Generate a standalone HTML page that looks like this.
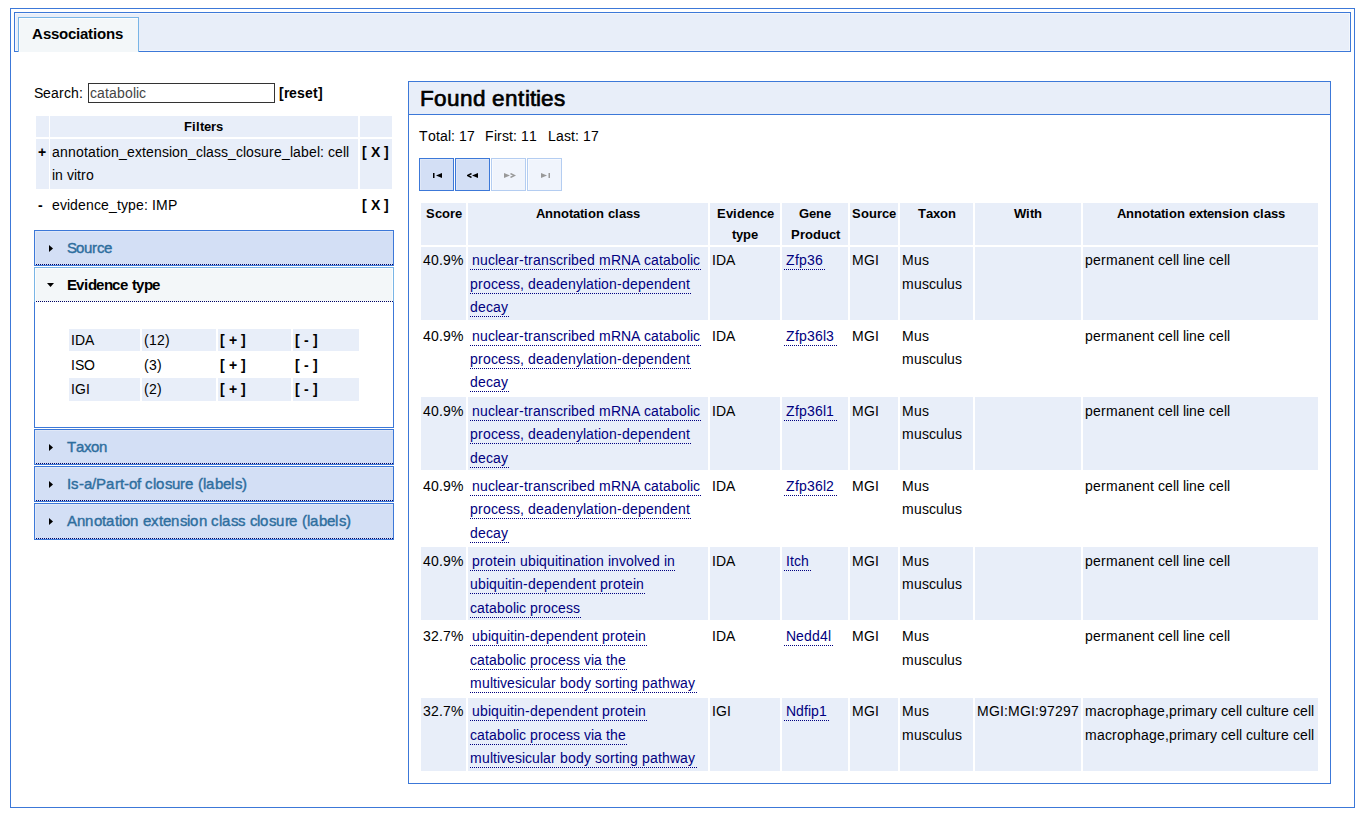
<!DOCTYPE html>
<html><head><meta charset="utf-8"><title>Associations</title>
<style>
html,body{margin:0;padding:0;background:#fff;}
body{width:1363px;height:827px;position:relative;overflow:hidden;font-family:"Liberation Sans",sans-serif;font-size:14px;color:#000;}
.r{position:absolute;display:block;}
.t{position:absolute;white-space:pre;line-height:20px;height:20px;}
.t i{display:inline-block;font-style:normal;}
.w3{width:3px}
.w4{width:4px}
.w5{width:5px}
.w6{width:6px}
.w7{width:7px}
.w8{width:8px}
.w9{width:9px}
.w10{width:10px}
.w11{width:11px}
.w12{width:12px}
.w13{width:13px}
.w14{width:14px}
</style></head><body>
<div class=r style="left:10px;top:8px;width:1345px;height:800px;box-sizing:border-box;border:1px solid #3c78d8;"></div>
<div class=r style="left:14px;top:12px;width:1337px;height:40px;background:#e8eef9;box-sizing:border-box;border:1px solid #3c78d8;box-shadow:inset 0 0 0 1px #f4f7fc;"></div>
<div class=r style="left:18px;top:17px;width:121px;height:35px;background:#f3f7f9;box-sizing:border-box;border:1px solid #79b5e6;border-bottom:0;box-shadow:inset 1px 1px 0 #fcfdfd;"></div>
<div class=t style="left:32px;top:24px;font-size:15px;font-weight:bold;"><i class=w11>A</i><i class=w8>s</i><i class=w8>s</i><i class=w9>o</i><i class=w8>c</i><i class=w4>i</i><i class=w8>a</i><i class=w5>t</i><i class=w4>i</i><i class=w9>o</i><i class=w9>n</i><i class=w8>s</i></div>
<div class=t style="left:34px;top:83px;"><i class=w9>S</i><i class=w8>e</i><i class=w8>a</i><i class=w5>r</i><i class=w7>c</i><i class=w8>h</i><i class=w4>:</i></div>
<div class=r style="left:88px;top:83px;width:187px;height:20px;background:#fff;box-sizing:border-box;border:1px solid #333;"></div>
<div class=t style="left:90px;top:83px;color:#444;"><i class=w7>c</i><i class=w8>a</i><i class=w4>t</i><i class=w8>a</i><i class=w8>b</i><i class=w8>o</i><i class=w3>l</i><i class=w3>i</i><i class=w7>c</i></div>
<div class=t style="left:279px;top:83px;font-weight:bold;"><i class=w5>[</i><i class=w5>r</i><i class=w8>e</i><i class=w8>s</i><i class=w8>e</i><i class=w5>t</i><i class=w5>]</i></div>
<div class=r style="left:36px;top:116px;width:13px;height:21px;background:#e8eef9;"></div>
<div class=r style="left:50px;top:116px;width:308px;height:21px;background:#e8eef9;"></div>
<div class=r style="left:360px;top:116px;width:32px;height:21px;background:#e8eef9;"></div>
<div class=t style="left:184px;top:117px;font-size:13px;font-weight:bold;"><i class=w8>F</i><i class=w4>i</i><i class=w4>l</i><i class=w4>t</i><i class=w7>e</i><i class=w5>r</i><i class=w7>s</i></div>
<div class=r style="left:36px;top:139px;width:13px;height:50px;background:#e8eef9;"></div>
<div class=r style="left:50px;top:139px;width:308px;height:50px;background:#e8eef9;"></div>
<div class=r style="left:360px;top:139px;width:32px;height:50px;background:#e8eef9;"></div>
<div class=t style="left:38px;top:142px;font-weight:bold;"><i class=w8>+</i></div>
<div class=t style="left:52px;top:142px;"><i class=w8>a</i><i class=w8>n</i><i class=w8>n</i><i class=w8>o</i><i class=w4>t</i><i class=w8>a</i><i class=w4>t</i><i class=w3>i</i><i class=w8>o</i><i class=w8>n</i><i class=w8>_</i><i class=w8>e</i><i class=w7>x</i><i class=w4>t</i><i class=w8>e</i><i class=w8>n</i><i class=w7>s</i><i class=w3>i</i><i class=w8>o</i><i class=w8>n</i><i class=w8>_</i><i class=w7>c</i><i class=w3>l</i><i class=w8>a</i><i class=w7>s</i><i class=w7>s</i><i class=w8>_</i><i class=w7>c</i><i class=w3>l</i><i class=w8>o</i><i class=w7>s</i><i class=w8>u</i><i class=w5>r</i><i class=w8>e</i><i class=w8>_</i><i class=w3>l</i><i class=w8>a</i><i class=w8>b</i><i class=w8>e</i><i class=w3>l</i><i class=w4>:</i><i class=w4> </i><i class=w7>c</i><i class=w8>e</i><i class=w3>l</i><i class=w3>l</i></div>
<div class=t style="left:52px;top:165px;"><i class=w3>i</i><i class=w8>n</i><i class=w4> </i><i class=w7>v</i><i class=w3>i</i><i class=w4>t</i><i class=w5>r</i><i class=w8>o</i></div>
<div class=t style="left:362px;top:142px;font-weight:bold;"><i class=w5>[</i><i class=w4> </i><i class=w9>X</i><i class=w4> </i><i class=w5>]</i></div>
<div class=t style="left:38px;top:195px;font-weight:bold;"><i class=w5>-</i></div>
<div class=t style="left:52px;top:195px;"><i class=w8>e</i><i class=w7>v</i><i class=w3>i</i><i class=w8>d</i><i class=w8>e</i><i class=w8>n</i><i class=w7>c</i><i class=w8>e</i><i class=w8>_</i><i class=w4>t</i><i class=w7>y</i><i class=w8>p</i><i class=w8>e</i><i class=w4>:</i><i class=w4> </i><i class=w4>I</i><i class=w12>M</i><i class=w9>P</i></div>
<div class=t style="left:362px;top:195px;font-weight:bold;"><i class=w5>[</i><i class=w4> </i><i class=w9>X</i><i class=w4> </i><i class=w5>]</i></div>
<div class=r style="left:34px;top:230px;width:360px;height:36px;background:#d3dff5;box-sizing:border-box;border:1px solid #3c78d8;box-shadow:inset 1px 1px 0 #e0e8f7;"></div>
<div class=r style="left:36px;top:264px;width:357px;height:1px;background:repeating-linear-gradient(90deg,#000060 0 1px,transparent 1px 2px);"></div>
<svg class=r style="left:49px;top:245px" width="5" height="7"><polygon points="0,0 4,3.5 0,7" fill="#000"/></svg>
<div class=t style="left:67px;top:238px;font-size:15px;color:#2e6e9e;-webkit-text-stroke:0.4px #2e6e9e;"><i class=w9>S</i><i class=w8>o</i><i class=w8>u</i><i class=w5>r</i><i class=w7>c</i><i class=w8>e</i></div>
<div class=r style="left:34px;top:267px;width:360px;height:35px;background:#f3f7f9;box-sizing:border-box;border:1px solid #79b5e6;border-bottom:0;box-shadow:inset 1px 1px 0 #fcfdfd, inset -1px 0 0 #fcfdfd;"></div>
<div class=r style="left:36px;top:301px;width:358px;height:1px;background:repeating-linear-gradient(90deg,#000060 0 1px,transparent 1px 2px);"></div>
<svg class=r style="left:47px;top:283px" width="7" height="4"><polygon points="0,0 7,0 3.5,4" fill="#000"/></svg>
<div class=t style="left:67px;top:275px;font-size:15px;font-weight:bold;"><i class=w9>E</i><i class=w8>v</i><i class=w4>i</i><i class=w8>d</i><i class=w8>e</i><i class=w8>n</i><i class=w8>c</i><i class=w8>e</i><i class=w4> </i><i class=w4>t</i><i class=w8>y</i><i class=w8>p</i><i class=w8>e</i></div>
<div class=r style="left:34px;top:302px;width:360px;height:126px;background:#fff;box-sizing:border-box;border:1px solid #3c78d8;border-top:0;"></div>
<div class=r style="left:69px;top:329px;width:71px;height:22px;background:#e8eef9;"></div>
<div class=r style="left:142px;top:329px;width:74px;height:22px;background:#e8eef9;"></div>
<div class=r style="left:218px;top:329px;width:73px;height:22px;background:#e8eef9;"></div>
<div class=r style="left:293px;top:329px;width:66px;height:22px;background:#e8eef9;"></div>
<div class=t style="left:71px;top:330px;"><i class=w4>I</i><i class=w10>D</i><i class=w9>A</i></div>
<div class=t style="left:144px;top:330px;"><i class=w5>(</i><i class=w8>1</i><i class=w8>2</i><i class=w5>)</i></div>
<div class=t style="left:220px;top:330px;font-weight:bold;"><i class=w5>[</i><i class=w4> </i><i class=w8>+</i><i class=w4> </i><i class=w5>]</i></div>
<div class=t style="left:295px;top:330px;font-weight:bold;"><i class=w5>[</i><i class=w4> </i><i class=w5>-</i><i class=w4> </i><i class=w5>]</i></div>
<div class=t style="left:71px;top:355px;"><i class=w4>I</i><i class=w9>S</i><i class=w11>O</i></div>
<div class=t style="left:144px;top:355px;"><i class=w5>(</i><i class=w8>3</i><i class=w5>)</i></div>
<div class=t style="left:220px;top:355px;font-weight:bold;"><i class=w5>[</i><i class=w4> </i><i class=w8>+</i><i class=w4> </i><i class=w5>]</i></div>
<div class=t style="left:295px;top:355px;font-weight:bold;"><i class=w5>[</i><i class=w4> </i><i class=w5>-</i><i class=w4> </i><i class=w5>]</i></div>
<div class=r style="left:69px;top:378px;width:71px;height:23px;background:#e8eef9;"></div>
<div class=r style="left:142px;top:378px;width:74px;height:23px;background:#e8eef9;"></div>
<div class=r style="left:218px;top:378px;width:73px;height:23px;background:#e8eef9;"></div>
<div class=r style="left:293px;top:378px;width:66px;height:23px;background:#e8eef9;"></div>
<div class=t style="left:71px;top:379px;"><i class=w4>I</i><i class=w11>G</i><i class=w4>I</i></div>
<div class=t style="left:144px;top:379px;"><i class=w5>(</i><i class=w8>2</i><i class=w5>)</i></div>
<div class=t style="left:220px;top:379px;font-weight:bold;"><i class=w5>[</i><i class=w4> </i><i class=w8>+</i><i class=w4> </i><i class=w5>]</i></div>
<div class=t style="left:295px;top:379px;font-weight:bold;"><i class=w5>[</i><i class=w4> </i><i class=w5>-</i><i class=w4> </i><i class=w5>]</i></div>
<div class=r style="left:34px;top:429px;width:360px;height:36px;background:#d3dff5;box-sizing:border-box;border:1px solid #3c78d8;box-shadow:inset 1px 1px 0 #e0e8f7;"></div>
<div class=r style="left:36px;top:463px;width:357px;height:1px;background:repeating-linear-gradient(90deg,#000060 0 1px,transparent 1px 2px);"></div>
<svg class=r style="left:49px;top:444px" width="5" height="7"><polygon points="0,0 4,3.5 0,7" fill="#000"/></svg>
<div class=t style="left:67px;top:437px;font-size:15px;color:#2e6e9e;-webkit-text-stroke:0.4px #2e6e9e;"><i class=w9>T</i><i class=w8>a</i><i class=w7>x</i><i class=w8>o</i><i class=w8>n</i></div>
<div class=r style="left:34px;top:466px;width:360px;height:36px;background:#d3dff5;box-sizing:border-box;border:1px solid #3c78d8;box-shadow:inset 1px 1px 0 #e0e8f7;"></div>
<div class=r style="left:36px;top:500px;width:357px;height:1px;background:repeating-linear-gradient(90deg,#000060 0 1px,transparent 1px 2px);"></div>
<svg class=r style="left:49px;top:481px" width="5" height="7"><polygon points="0,0 4,3.5 0,7" fill="#000"/></svg>
<div class=t style="left:67px;top:474px;font-size:15px;color:#2e6e9e;-webkit-text-stroke:0.4px #2e6e9e;"><i class=w4>I</i><i class=w8>s</i><i class=w5>-</i><i class=w8>a</i><i class=w4>/</i><i class=w10>P</i><i class=w9>a</i><i class=w5>r</i><i class=w4>t</i><i class=w5>-</i><i class=w8>o</i><i class=w4>f</i><i class=w4> </i><i class=w8>c</i><i class=w3>l</i><i class=w9>o</i><i class=w7>s</i><i class=w8>u</i><i class=w5>r</i><i class=w9>e</i><i class=w4> </i><i class=w5>(</i><i class=w3>l</i><i class=w9>a</i><i class=w8>b</i><i class=w8>e</i><i class=w4>l</i><i class=w7>s</i><i class=w5>)</i></div>
<div class=r style="left:34px;top:503px;width:360px;height:37px;background:#d3dff5;box-sizing:border-box;border:1px solid #3c78d8;box-shadow:inset 1px 1px 0 #e0e8f7;"></div>
<div class=r style="left:36px;top:538px;width:357px;height:1px;background:repeating-linear-gradient(90deg,#000060 0 1px,transparent 1px 2px);"></div>
<svg class=r style="left:49px;top:518px" width="5" height="7"><polygon points="0,0 4,3.5 0,7" fill="#000"/></svg>
<div class=t style="left:67px;top:511px;font-size:15px;color:#2e6e9e;-webkit-text-stroke:0.4px #2e6e9e;"><i class=w10>A</i><i class=w8>n</i><i class=w9>n</i><i class=w8>o</i><i class=w4>t</i><i class=w9>a</i><i class=w4>t</i><i class=w3>i</i><i class=w8>o</i><i class=w9>n</i><i class=w4> </i><i class=w8>e</i><i class=w8>x</i><i class=w4>t</i><i class=w8>e</i><i class=w9>n</i><i class=w7>s</i><i class=w3>i</i><i class=w9>o</i><i class=w8>n</i><i class=w4> </i><i class=w8>c</i><i class=w3>l</i><i class=w9>a</i><i class=w7>s</i><i class=w7>s</i><i class=w5> </i><i class=w7>c</i><i class=w3>l</i><i class=w9>o</i><i class=w7>s</i><i class=w9>u</i><i class=w4>r</i><i class=w9>e</i><i class=w4> </i><i class=w5>(</i><i class=w3>l</i><i class=w9>a</i><i class=w8>b</i><i class=w8>e</i><i class=w4>l</i><i class=w7>s</i><i class=w5>)</i></div>
<div class=r style="left:408px;top:81px;width:923px;height:703px;box-sizing:border-box;border:1px solid #3c78d8;"></div>
<div class=r style="left:409px;top:82px;width:921px;height:32px;background:#e8eef9;"></div>
<div class=r style="left:409px;top:114px;width:921px;height:1px;background:#3c78d8;"></div>
<div class=t style="left:420px;top:89px;font-size:22.5px;-webkit-text-stroke:0.7px #000;"><i class=w14>F</i><i class=w13>o</i><i class=w13>u</i><i class=w13>n</i><i class=w13>d</i><i class=w6> </i><i class=w13>e</i><i class=w13>n</i><i class=w7>t</i><i class=w5>i</i><i class=w6>t</i><i class=w5>i</i><i class=w13>e</i><i class=w12>s</i></div>
<div class=t style="left:419px;top:126px;"><i class=w9>T</i><i class=w8>o</i><i class=w4>t</i><i class=w8>a</i><i class=w3>l</i><i class=w4>:</i><i class=w4> </i><i class=w8>1</i><i class=w8>7</i></div>
<div class=t style="left:485px;top:126px;"><i class=w9>F</i><i class=w3>i</i><i class=w5>r</i><i class=w7>s</i><i class=w4>t</i><i class=w4>:</i><i class=w4> </i><i class=w8>1</i><i class=w8>1</i></div>
<div class=t style="left:548px;top:126px;"><i class=w8>L</i><i class=w8>a</i><i class=w7>s</i><i class=w4>t</i><i class=w4>:</i><i class=w4> </i><i class=w8>1</i><i class=w8>7</i></div>
<div class=r style="left:419px;top:158px;width:35px;height:33px;background:#d3dff5;box-sizing:border-box;border:1px solid #3c78d8;box-shadow:inset 1px 1px 0 #e0e8f7;"></div>
<div class=r style="left:455px;top:158px;width:35px;height:33px;background:#d3dff5;box-sizing:border-box;border:1px solid #3c78d8;box-shadow:inset 1px 1px 0 #e0e8f7;"></div>
<div class=r style="left:491px;top:158px;width:35px;height:33px;background:#f0f4fc;box-sizing:border-box;border:1px solid #b4cdf1;box-shadow:inset 1px 1px 0 #f8fafe;"></div>
<div class=r style="left:527px;top:158px;width:35px;height:33px;background:#f0f4fc;box-sizing:border-box;border:1px solid #b4cdf1;box-shadow:inset 1px 1px 0 #f8fafe;"></div>
<svg class=r style="left:433px;top:173px" width="12" height="5"><rect x="0" y="0" width="1.5" height="5" fill="#000"/><polygon points="3,2.5 9,0 9,5" fill="#000"/></svg>
<svg class=r style="left:467px;top:173px" width="12" height="5"><polyline points="4.5,0.5 0.5,2.5 4.5,4.5" fill="none" stroke="#000" stroke-width="1.4"/><polygon points="5,2.5 11,0 11,5" fill="#000"/></svg>
<svg class=r style="left:504px;top:173px" width="12" height="5"><polygon points="0,0 6,2.5 0,5" fill="#999"/><polyline points="6.5,0.5 10.5,2.5 6.5,4.5" fill="none" stroke="#999" stroke-width="1.4"/></svg>
<svg class=r style="left:541px;top:173px" width="12" height="5"><polygon points="0,0 6,2.5 0,5" fill="#999"/><rect x="7.5" y="0" width="1.5" height="5" fill="#999"/></svg>
<div class=r style="left:421px;top:203px;width:45px;height:42px;background:#e8eef9;"></div>
<div class=t style="left:426px;top:204px;font-size:13px;font-weight:bold;"><i class=w9>S</i><i class=w7>c</i><i class=w8>o</i><i class=w5>r</i><i class=w7>e</i></div>
<div class=r style="left:468px;top:203px;width:240px;height:42px;background:#e8eef9;"></div>
<div class=t style="left:536px;top:204px;font-size:13px;font-weight:bold;"><i class=w9>A</i><i class=w8>n</i><i class=w8>n</i><i class=w8>o</i><i class=w4>t</i><i class=w7>a</i><i class=w4>t</i><i class=w4>i</i><i class=w8>o</i><i class=w8>n</i><i class=w4> </i><i class=w7>c</i><i class=w4>l</i><i class=w7>a</i><i class=w7>s</i><i class=w7>s</i></div>
<div class=r style="left:710px;top:203px;width:70px;height:42px;background:#e8eef9;"></div>
<div class=t style="left:717px;top:204px;font-size:13px;font-weight:bold;"><i class=w9>E</i><i class=w7>v</i><i class=w4>i</i><i class=w8>d</i><i class=w7>e</i><i class=w8>n</i><i class=w7>c</i><i class=w7>e</i></div>
<div class=t style="left:732px;top:225px;font-size:13px;font-weight:bold;"><i class=w4>t</i><i class=w7>y</i><i class=w8>p</i><i class=w7>e</i></div>
<div class=r style="left:782px;top:203px;width:66px;height:42px;background:#e8eef9;"></div>
<div class=t style="left:799px;top:204px;font-size:13px;font-weight:bold;"><i class=w10>G</i><i class=w7>e</i><i class=w8>n</i><i class=w7>e</i></div>
<div class=t style="left:791px;top:225px;font-size:13px;font-weight:bold;"><i class=w9>P</i><i class=w5>r</i><i class=w8>o</i><i class=w8>d</i><i class=w8>u</i><i class=w7>c</i><i class=w4>t</i></div>
<div class=r style="left:850px;top:203px;width:48px;height:42px;background:#e8eef9;"></div>
<div class=t style="left:852px;top:204px;font-size:13px;font-weight:bold;"><i class=w9>S</i><i class=w8>o</i><i class=w8>u</i><i class=w5>r</i><i class=w7>c</i><i class=w7>e</i></div>
<div class=r style="left:900px;top:203px;width:73px;height:42px;background:#e8eef9;"></div>
<div class=t style="left:918px;top:204px;font-size:13px;font-weight:bold;"><i class=w8>T</i><i class=w7>a</i><i class=w7>x</i><i class=w8>o</i><i class=w8>n</i></div>
<div class=r style="left:975px;top:203px;width:106px;height:42px;background:#e8eef9;"></div>
<div class=t style="left:1014px;top:204px;font-size:13px;font-weight:bold;"><i class=w12>W</i><i class=w4>i</i><i class=w4>t</i><i class=w8>h</i></div>
<div class=r style="left:1083px;top:203px;width:235px;height:42px;background:#e8eef9;"></div>
<div class=t style="left:1117px;top:204px;font-size:13px;font-weight:bold;"><i class=w9>A</i><i class=w8>n</i><i class=w8>n</i><i class=w8>o</i><i class=w4>t</i><i class=w7>a</i><i class=w4>t</i><i class=w4>i</i><i class=w8>o</i><i class=w8>n</i><i class=w4> </i><i class=w7>e</i><i class=w7>x</i><i class=w4>t</i><i class=w7>e</i><i class=w8>n</i><i class=w7>s</i><i class=w4>i</i><i class=w8>o</i><i class=w8>n</i><i class=w4> </i><i class=w7>c</i><i class=w4>l</i><i class=w7>a</i><i class=w7>s</i><i class=w7>s</i></div>
<div class=r style="left:421px;top:247px;width:45px;height:73px;background:#e8eef9;"></div>
<div class=r style="left:468px;top:247px;width:240px;height:73px;background:#e8eef9;"></div>
<div class=r style="left:710px;top:247px;width:70px;height:73px;background:#e8eef9;"></div>
<div class=r style="left:782px;top:247px;width:66px;height:73px;background:#e8eef9;"></div>
<div class=r style="left:850px;top:247px;width:48px;height:73px;background:#e8eef9;"></div>
<div class=r style="left:900px;top:247px;width:73px;height:73px;background:#e8eef9;"></div>
<div class=r style="left:975px;top:247px;width:106px;height:73px;background:#e8eef9;"></div>
<div class=r style="left:1083px;top:247px;width:235px;height:73px;background:#e8eef9;"></div>
<div class=t style="left:423px;top:250px;"><i class=w8>4</i><i class=w8>0</i><i class=w4>.</i><i class=w8>9</i><i class=w12>%</i></div>
<div class=t style="left:472px;top:250px;color:#000080;"><i class=w8>n</i><i class=w8>u</i><i class=w7>c</i><i class=w3>l</i><i class=w8>e</i><i class=w8>a</i><i class=w5>r</i><i class=w5>-</i><i class=w4>t</i><i class=w5>r</i><i class=w8>a</i><i class=w8>n</i><i class=w7>s</i><i class=w7>c</i><i class=w5>r</i><i class=w3>i</i><i class=w8>b</i><i class=w8>e</i><i class=w8>d</i><i class=w4> </i><i class=w12>m</i><i class=w10>R</i><i class=w10>N</i><i class=w9>A</i><i class=w4> </i><i class=w7>c</i><i class=w8>a</i><i class=w4>t</i><i class=w8>a</i><i class=w8>b</i><i class=w8>o</i><i class=w3>l</i><i class=w3>i</i><i class=w7>c</i></div>
<div class=r style="left:470px;top:269px;width:231px;height:1px;background:repeating-linear-gradient(90deg,#000080 0 1px,transparent 1px 2px);"></div>
<div class=t style="left:470px;top:274px;color:#000080;"><i class=w8>p</i><i class=w5>r</i><i class=w8>o</i><i class=w7>c</i><i class=w8>e</i><i class=w7>s</i><i class=w7>s</i><i class=w4>,</i><i class=w4> </i><i class=w8>d</i><i class=w8>e</i><i class=w8>a</i><i class=w8>d</i><i class=w8>e</i><i class=w8>n</i><i class=w7>y</i><i class=w3>l</i><i class=w8>a</i><i class=w4>t</i><i class=w3>i</i><i class=w8>o</i><i class=w8>n</i><i class=w5>-</i><i class=w8>d</i><i class=w8>e</i><i class=w8>p</i><i class=w8>e</i><i class=w8>n</i><i class=w8>d</i><i class=w8>e</i><i class=w8>n</i><i class=w4>t</i></div>
<div class=r style="left:470px;top:293px;width:221px;height:1px;background:repeating-linear-gradient(90deg,#000080 0 1px,transparent 1px 2px);"></div>
<div class=t style="left:470px;top:297px;color:#000080;"><i class=w8>d</i><i class=w8>e</i><i class=w7>c</i><i class=w8>a</i><i class=w7>y</i></div>
<div class=r style="left:470px;top:316px;width:40px;height:1px;background:repeating-linear-gradient(90deg,#000080 0 1px,transparent 1px 2px);"></div>
<div class=t style="left:712px;top:250px;"><i class=w4>I</i><i class=w10>D</i><i class=w9>A</i></div>
<div class=t style="left:786px;top:250px;color:#000080;"><i class=w9>Z</i><i class=w4>f</i><i class=w8>p</i><i class=w8>3</i><i class=w8>6</i></div>
<div class=r style="left:784px;top:269px;width:42px;height:1px;background:repeating-linear-gradient(90deg,#000080 0 1px,transparent 1px 2px);"></div>
<div class=t style="left:852px;top:250px;"><i class=w12>M</i><i class=w11>G</i><i class=w4>I</i></div>
<div class=t style="left:902px;top:250px;"><i class=w12>M</i><i class=w8>u</i><i class=w7>s</i></div>
<div class=t style="left:902px;top:274px;"><i class=w12>m</i><i class=w8>u</i><i class=w7>s</i><i class=w7>c</i><i class=w8>u</i><i class=w3>l</i><i class=w8>u</i><i class=w7>s</i></div>
<div class=t style="left:1085px;top:250px;"><i class=w8>p</i><i class=w8>e</i><i class=w5>r</i><i class=w12>m</i><i class=w8>a</i><i class=w8>n</i><i class=w8>e</i><i class=w8>n</i><i class=w4>t</i><i class=w4> </i><i class=w7>c</i><i class=w8>e</i><i class=w3>l</i><i class=w3>l</i><i class=w4> </i><i class=w3>l</i><i class=w3>i</i><i class=w8>n</i><i class=w8>e</i><i class=w4> </i><i class=w7>c</i><i class=w8>e</i><i class=w3>l</i><i class=w3>l</i></div>
<div class=t style="left:423px;top:326px;"><i class=w8>4</i><i class=w8>0</i><i class=w4>.</i><i class=w8>9</i><i class=w12>%</i></div>
<div class=t style="left:472px;top:326px;color:#000080;"><i class=w8>n</i><i class=w8>u</i><i class=w7>c</i><i class=w3>l</i><i class=w8>e</i><i class=w8>a</i><i class=w5>r</i><i class=w5>-</i><i class=w4>t</i><i class=w5>r</i><i class=w8>a</i><i class=w8>n</i><i class=w7>s</i><i class=w7>c</i><i class=w5>r</i><i class=w3>i</i><i class=w8>b</i><i class=w8>e</i><i class=w8>d</i><i class=w4> </i><i class=w12>m</i><i class=w10>R</i><i class=w10>N</i><i class=w9>A</i><i class=w4> </i><i class=w7>c</i><i class=w8>a</i><i class=w4>t</i><i class=w8>a</i><i class=w8>b</i><i class=w8>o</i><i class=w3>l</i><i class=w3>i</i><i class=w7>c</i></div>
<div class=r style="left:470px;top:345px;width:231px;height:1px;background:repeating-linear-gradient(90deg,#000080 0 1px,transparent 1px 2px);"></div>
<div class=t style="left:470px;top:349px;color:#000080;"><i class=w8>p</i><i class=w5>r</i><i class=w8>o</i><i class=w7>c</i><i class=w8>e</i><i class=w7>s</i><i class=w7>s</i><i class=w4>,</i><i class=w4> </i><i class=w8>d</i><i class=w8>e</i><i class=w8>a</i><i class=w8>d</i><i class=w8>e</i><i class=w8>n</i><i class=w7>y</i><i class=w3>l</i><i class=w8>a</i><i class=w4>t</i><i class=w3>i</i><i class=w8>o</i><i class=w8>n</i><i class=w5>-</i><i class=w8>d</i><i class=w8>e</i><i class=w8>p</i><i class=w8>e</i><i class=w8>n</i><i class=w8>d</i><i class=w8>e</i><i class=w8>n</i><i class=w4>t</i></div>
<div class=r style="left:470px;top:368px;width:221px;height:1px;background:repeating-linear-gradient(90deg,#000080 0 1px,transparent 1px 2px);"></div>
<div class=t style="left:470px;top:372px;color:#000080;"><i class=w8>d</i><i class=w8>e</i><i class=w7>c</i><i class=w8>a</i><i class=w7>y</i></div>
<div class=r style="left:470px;top:391px;width:40px;height:1px;background:repeating-linear-gradient(90deg,#000080 0 1px,transparent 1px 2px);"></div>
<div class=t style="left:712px;top:326px;"><i class=w4>I</i><i class=w10>D</i><i class=w9>A</i></div>
<div class=t style="left:786px;top:326px;color:#000080;"><i class=w9>Z</i><i class=w4>f</i><i class=w8>p</i><i class=w8>3</i><i class=w8>6</i><i class=w3>l</i><i class=w8>3</i></div>
<div class=r style="left:784px;top:345px;width:53px;height:1px;background:repeating-linear-gradient(90deg,#000080 0 1px,transparent 1px 2px);"></div>
<div class=t style="left:852px;top:326px;"><i class=w12>M</i><i class=w11>G</i><i class=w4>I</i></div>
<div class=t style="left:902px;top:326px;"><i class=w12>M</i><i class=w8>u</i><i class=w7>s</i></div>
<div class=t style="left:902px;top:349px;"><i class=w12>m</i><i class=w8>u</i><i class=w7>s</i><i class=w7>c</i><i class=w8>u</i><i class=w3>l</i><i class=w8>u</i><i class=w7>s</i></div>
<div class=t style="left:1085px;top:326px;"><i class=w8>p</i><i class=w8>e</i><i class=w5>r</i><i class=w12>m</i><i class=w8>a</i><i class=w8>n</i><i class=w8>e</i><i class=w8>n</i><i class=w4>t</i><i class=w4> </i><i class=w7>c</i><i class=w8>e</i><i class=w3>l</i><i class=w3>l</i><i class=w4> </i><i class=w3>l</i><i class=w3>i</i><i class=w8>n</i><i class=w8>e</i><i class=w4> </i><i class=w7>c</i><i class=w8>e</i><i class=w3>l</i><i class=w3>l</i></div>
<div class=r style="left:421px;top:397px;width:45px;height:73px;background:#e8eef9;"></div>
<div class=r style="left:468px;top:397px;width:240px;height:73px;background:#e8eef9;"></div>
<div class=r style="left:710px;top:397px;width:70px;height:73px;background:#e8eef9;"></div>
<div class=r style="left:782px;top:397px;width:66px;height:73px;background:#e8eef9;"></div>
<div class=r style="left:850px;top:397px;width:48px;height:73px;background:#e8eef9;"></div>
<div class=r style="left:900px;top:397px;width:73px;height:73px;background:#e8eef9;"></div>
<div class=r style="left:975px;top:397px;width:106px;height:73px;background:#e8eef9;"></div>
<div class=r style="left:1083px;top:397px;width:235px;height:73px;background:#e8eef9;"></div>
<div class=t style="left:423px;top:401px;"><i class=w8>4</i><i class=w8>0</i><i class=w4>.</i><i class=w8>9</i><i class=w12>%</i></div>
<div class=t style="left:472px;top:401px;color:#000080;"><i class=w8>n</i><i class=w8>u</i><i class=w7>c</i><i class=w3>l</i><i class=w8>e</i><i class=w8>a</i><i class=w5>r</i><i class=w5>-</i><i class=w4>t</i><i class=w5>r</i><i class=w8>a</i><i class=w8>n</i><i class=w7>s</i><i class=w7>c</i><i class=w5>r</i><i class=w3>i</i><i class=w8>b</i><i class=w8>e</i><i class=w8>d</i><i class=w4> </i><i class=w12>m</i><i class=w10>R</i><i class=w10>N</i><i class=w9>A</i><i class=w4> </i><i class=w7>c</i><i class=w8>a</i><i class=w4>t</i><i class=w8>a</i><i class=w8>b</i><i class=w8>o</i><i class=w3>l</i><i class=w3>i</i><i class=w7>c</i></div>
<div class=r style="left:470px;top:420px;width:231px;height:1px;background:repeating-linear-gradient(90deg,#000080 0 1px,transparent 1px 2px);"></div>
<div class=t style="left:470px;top:424px;color:#000080;"><i class=w8>p</i><i class=w5>r</i><i class=w8>o</i><i class=w7>c</i><i class=w8>e</i><i class=w7>s</i><i class=w7>s</i><i class=w4>,</i><i class=w4> </i><i class=w8>d</i><i class=w8>e</i><i class=w8>a</i><i class=w8>d</i><i class=w8>e</i><i class=w8>n</i><i class=w7>y</i><i class=w3>l</i><i class=w8>a</i><i class=w4>t</i><i class=w3>i</i><i class=w8>o</i><i class=w8>n</i><i class=w5>-</i><i class=w8>d</i><i class=w8>e</i><i class=w8>p</i><i class=w8>e</i><i class=w8>n</i><i class=w8>d</i><i class=w8>e</i><i class=w8>n</i><i class=w4>t</i></div>
<div class=r style="left:470px;top:443px;width:221px;height:1px;background:repeating-linear-gradient(90deg,#000080 0 1px,transparent 1px 2px);"></div>
<div class=t style="left:470px;top:448px;color:#000080;"><i class=w8>d</i><i class=w8>e</i><i class=w7>c</i><i class=w8>a</i><i class=w7>y</i></div>
<div class=r style="left:470px;top:467px;width:40px;height:1px;background:repeating-linear-gradient(90deg,#000080 0 1px,transparent 1px 2px);"></div>
<div class=t style="left:712px;top:401px;"><i class=w4>I</i><i class=w10>D</i><i class=w9>A</i></div>
<div class=t style="left:786px;top:401px;color:#000080;"><i class=w9>Z</i><i class=w4>f</i><i class=w8>p</i><i class=w8>3</i><i class=w8>6</i><i class=w3>l</i><i class=w8>1</i></div>
<div class=r style="left:784px;top:420px;width:53px;height:1px;background:repeating-linear-gradient(90deg,#000080 0 1px,transparent 1px 2px);"></div>
<div class=t style="left:852px;top:401px;"><i class=w12>M</i><i class=w11>G</i><i class=w4>I</i></div>
<div class=t style="left:902px;top:401px;"><i class=w12>M</i><i class=w8>u</i><i class=w7>s</i></div>
<div class=t style="left:902px;top:424px;"><i class=w12>m</i><i class=w8>u</i><i class=w7>s</i><i class=w7>c</i><i class=w8>u</i><i class=w3>l</i><i class=w8>u</i><i class=w7>s</i></div>
<div class=t style="left:1085px;top:401px;"><i class=w8>p</i><i class=w8>e</i><i class=w5>r</i><i class=w12>m</i><i class=w8>a</i><i class=w8>n</i><i class=w8>e</i><i class=w8>n</i><i class=w4>t</i><i class=w4> </i><i class=w7>c</i><i class=w8>e</i><i class=w3>l</i><i class=w3>l</i><i class=w4> </i><i class=w3>l</i><i class=w3>i</i><i class=w8>n</i><i class=w8>e</i><i class=w4> </i><i class=w7>c</i><i class=w8>e</i><i class=w3>l</i><i class=w3>l</i></div>
<div class=t style="left:423px;top:476px;"><i class=w8>4</i><i class=w8>0</i><i class=w4>.</i><i class=w8>9</i><i class=w12>%</i></div>
<div class=t style="left:472px;top:476px;color:#000080;"><i class=w8>n</i><i class=w8>u</i><i class=w7>c</i><i class=w3>l</i><i class=w8>e</i><i class=w8>a</i><i class=w5>r</i><i class=w5>-</i><i class=w4>t</i><i class=w5>r</i><i class=w8>a</i><i class=w8>n</i><i class=w7>s</i><i class=w7>c</i><i class=w5>r</i><i class=w3>i</i><i class=w8>b</i><i class=w8>e</i><i class=w8>d</i><i class=w4> </i><i class=w12>m</i><i class=w10>R</i><i class=w10>N</i><i class=w9>A</i><i class=w4> </i><i class=w7>c</i><i class=w8>a</i><i class=w4>t</i><i class=w8>a</i><i class=w8>b</i><i class=w8>o</i><i class=w3>l</i><i class=w3>i</i><i class=w7>c</i></div>
<div class=r style="left:470px;top:495px;width:231px;height:1px;background:repeating-linear-gradient(90deg,#000080 0 1px,transparent 1px 2px);"></div>
<div class=t style="left:470px;top:499px;color:#000080;"><i class=w8>p</i><i class=w5>r</i><i class=w8>o</i><i class=w7>c</i><i class=w8>e</i><i class=w7>s</i><i class=w7>s</i><i class=w4>,</i><i class=w4> </i><i class=w8>d</i><i class=w8>e</i><i class=w8>a</i><i class=w8>d</i><i class=w8>e</i><i class=w8>n</i><i class=w7>y</i><i class=w3>l</i><i class=w8>a</i><i class=w4>t</i><i class=w3>i</i><i class=w8>o</i><i class=w8>n</i><i class=w5>-</i><i class=w8>d</i><i class=w8>e</i><i class=w8>p</i><i class=w8>e</i><i class=w8>n</i><i class=w8>d</i><i class=w8>e</i><i class=w8>n</i><i class=w4>t</i></div>
<div class=r style="left:470px;top:518px;width:221px;height:1px;background:repeating-linear-gradient(90deg,#000080 0 1px,transparent 1px 2px);"></div>
<div class=t style="left:470px;top:523px;color:#000080;"><i class=w8>d</i><i class=w8>e</i><i class=w7>c</i><i class=w8>a</i><i class=w7>y</i></div>
<div class=r style="left:470px;top:542px;width:40px;height:1px;background:repeating-linear-gradient(90deg,#000080 0 1px,transparent 1px 2px);"></div>
<div class=t style="left:712px;top:476px;"><i class=w4>I</i><i class=w10>D</i><i class=w9>A</i></div>
<div class=t style="left:786px;top:476px;color:#000080;"><i class=w9>Z</i><i class=w4>f</i><i class=w8>p</i><i class=w8>3</i><i class=w8>6</i><i class=w3>l</i><i class=w8>2</i></div>
<div class=r style="left:784px;top:495px;width:53px;height:1px;background:repeating-linear-gradient(90deg,#000080 0 1px,transparent 1px 2px);"></div>
<div class=t style="left:852px;top:476px;"><i class=w12>M</i><i class=w11>G</i><i class=w4>I</i></div>
<div class=t style="left:902px;top:476px;"><i class=w12>M</i><i class=w8>u</i><i class=w7>s</i></div>
<div class=t style="left:902px;top:499px;"><i class=w12>m</i><i class=w8>u</i><i class=w7>s</i><i class=w7>c</i><i class=w8>u</i><i class=w3>l</i><i class=w8>u</i><i class=w7>s</i></div>
<div class=t style="left:1085px;top:476px;"><i class=w8>p</i><i class=w8>e</i><i class=w5>r</i><i class=w12>m</i><i class=w8>a</i><i class=w8>n</i><i class=w8>e</i><i class=w8>n</i><i class=w4>t</i><i class=w4> </i><i class=w7>c</i><i class=w8>e</i><i class=w3>l</i><i class=w3>l</i><i class=w4> </i><i class=w3>l</i><i class=w3>i</i><i class=w8>n</i><i class=w8>e</i><i class=w4> </i><i class=w7>c</i><i class=w8>e</i><i class=w3>l</i><i class=w3>l</i></div>
<div class=r style="left:421px;top:547px;width:45px;height:73px;background:#e8eef9;"></div>
<div class=r style="left:468px;top:547px;width:240px;height:73px;background:#e8eef9;"></div>
<div class=r style="left:710px;top:547px;width:70px;height:73px;background:#e8eef9;"></div>
<div class=r style="left:782px;top:547px;width:66px;height:73px;background:#e8eef9;"></div>
<div class=r style="left:850px;top:547px;width:48px;height:73px;background:#e8eef9;"></div>
<div class=r style="left:900px;top:547px;width:73px;height:73px;background:#e8eef9;"></div>
<div class=r style="left:975px;top:547px;width:106px;height:73px;background:#e8eef9;"></div>
<div class=r style="left:1083px;top:547px;width:235px;height:73px;background:#e8eef9;"></div>
<div class=t style="left:423px;top:551px;"><i class=w8>4</i><i class=w8>0</i><i class=w4>.</i><i class=w8>9</i><i class=w12>%</i></div>
<div class=t style="left:472px;top:551px;color:#000080;"><i class=w8>p</i><i class=w5>r</i><i class=w8>o</i><i class=w4>t</i><i class=w8>e</i><i class=w3>i</i><i class=w8>n</i><i class=w4> </i><i class=w8>u</i><i class=w8>b</i><i class=w3>i</i><i class=w8>q</i><i class=w8>u</i><i class=w3>i</i><i class=w4>t</i><i class=w3>i</i><i class=w8>n</i><i class=w8>a</i><i class=w4>t</i><i class=w3>i</i><i class=w8>o</i><i class=w8>n</i><i class=w4> </i><i class=w3>i</i><i class=w8>n</i><i class=w7>v</i><i class=w8>o</i><i class=w3>l</i><i class=w7>v</i><i class=w8>e</i><i class=w8>d</i><i class=w4> </i><i class=w3>i</i><i class=w8>n</i></div>
<div class=r style="left:470px;top:570px;width:206px;height:1px;background:repeating-linear-gradient(90deg,#000080 0 1px,transparent 1px 2px);"></div>
<div class=t style="left:470px;top:574px;color:#000080;"><i class=w8>u</i><i class=w8>b</i><i class=w3>i</i><i class=w8>q</i><i class=w8>u</i><i class=w3>i</i><i class=w4>t</i><i class=w3>i</i><i class=w8>n</i><i class=w5>-</i><i class=w8>d</i><i class=w8>e</i><i class=w8>p</i><i class=w8>e</i><i class=w8>n</i><i class=w8>d</i><i class=w8>e</i><i class=w8>n</i><i class=w4>t</i><i class=w4> </i><i class=w8>p</i><i class=w5>r</i><i class=w8>o</i><i class=w4>t</i><i class=w8>e</i><i class=w3>i</i><i class=w8>n</i></div>
<div class=r style="left:470px;top:593px;width:175px;height:1px;background:repeating-linear-gradient(90deg,#000080 0 1px,transparent 1px 2px);"></div>
<div class=t style="left:470px;top:598px;color:#000080;"><i class=w7>c</i><i class=w8>a</i><i class=w4>t</i><i class=w8>a</i><i class=w8>b</i><i class=w8>o</i><i class=w3>l</i><i class=w3>i</i><i class=w7>c</i><i class=w4> </i><i class=w8>p</i><i class=w5>r</i><i class=w8>o</i><i class=w7>c</i><i class=w8>e</i><i class=w7>s</i><i class=w7>s</i></div>
<div class=r style="left:470px;top:617px;width:112px;height:1px;background:repeating-linear-gradient(90deg,#000080 0 1px,transparent 1px 2px);"></div>
<div class=t style="left:712px;top:551px;"><i class=w4>I</i><i class=w10>D</i><i class=w9>A</i></div>
<div class=t style="left:786px;top:551px;color:#000080;"><i class=w4>I</i><i class=w4>t</i><i class=w7>c</i><i class=w8>h</i></div>
<div class=r style="left:784px;top:570px;width:28px;height:1px;background:repeating-linear-gradient(90deg,#000080 0 1px,transparent 1px 2px);"></div>
<div class=t style="left:852px;top:551px;"><i class=w12>M</i><i class=w11>G</i><i class=w4>I</i></div>
<div class=t style="left:902px;top:551px;"><i class=w12>M</i><i class=w8>u</i><i class=w7>s</i></div>
<div class=t style="left:902px;top:574px;"><i class=w12>m</i><i class=w8>u</i><i class=w7>s</i><i class=w7>c</i><i class=w8>u</i><i class=w3>l</i><i class=w8>u</i><i class=w7>s</i></div>
<div class=t style="left:1085px;top:551px;"><i class=w8>p</i><i class=w8>e</i><i class=w5>r</i><i class=w12>m</i><i class=w8>a</i><i class=w8>n</i><i class=w8>e</i><i class=w8>n</i><i class=w4>t</i><i class=w4> </i><i class=w7>c</i><i class=w8>e</i><i class=w3>l</i><i class=w3>l</i><i class=w4> </i><i class=w3>l</i><i class=w3>i</i><i class=w8>n</i><i class=w8>e</i><i class=w4> </i><i class=w7>c</i><i class=w8>e</i><i class=w3>l</i><i class=w3>l</i></div>
<div class=t style="left:423px;top:626px;"><i class=w8>3</i><i class=w8>2</i><i class=w4>.</i><i class=w8>7</i><i class=w12>%</i></div>
<div class=t style="left:472px;top:626px;color:#000080;"><i class=w8>u</i><i class=w8>b</i><i class=w3>i</i><i class=w8>q</i><i class=w8>u</i><i class=w3>i</i><i class=w4>t</i><i class=w3>i</i><i class=w8>n</i><i class=w5>-</i><i class=w8>d</i><i class=w8>e</i><i class=w8>p</i><i class=w8>e</i><i class=w8>n</i><i class=w8>d</i><i class=w8>e</i><i class=w8>n</i><i class=w4>t</i><i class=w4> </i><i class=w8>p</i><i class=w5>r</i><i class=w8>o</i><i class=w4>t</i><i class=w8>e</i><i class=w3>i</i><i class=w8>n</i></div>
<div class=r style="left:470px;top:645px;width:177px;height:1px;background:repeating-linear-gradient(90deg,#000080 0 1px,transparent 1px 2px);"></div>
<div class=t style="left:470px;top:650px;color:#000080;"><i class=w7>c</i><i class=w8>a</i><i class=w4>t</i><i class=w8>a</i><i class=w8>b</i><i class=w8>o</i><i class=w3>l</i><i class=w3>i</i><i class=w7>c</i><i class=w4> </i><i class=w8>p</i><i class=w5>r</i><i class=w8>o</i><i class=w7>c</i><i class=w8>e</i><i class=w7>s</i><i class=w7>s</i><i class=w4> </i><i class=w7>v</i><i class=w3>i</i><i class=w8>a</i><i class=w4> </i><i class=w4>t</i><i class=w8>h</i><i class=w8>e</i></div>
<div class=r style="left:470px;top:669px;width:157px;height:1px;background:repeating-linear-gradient(90deg,#000080 0 1px,transparent 1px 2px);"></div>
<div class=t style="left:470px;top:673px;color:#000080;"><i class=w12>m</i><i class=w8>u</i><i class=w3>l</i><i class=w4>t</i><i class=w3>i</i><i class=w7>v</i><i class=w8>e</i><i class=w7>s</i><i class=w3>i</i><i class=w7>c</i><i class=w8>u</i><i class=w3>l</i><i class=w8>a</i><i class=w5>r</i><i class=w4> </i><i class=w8>b</i><i class=w8>o</i><i class=w8>d</i><i class=w7>y</i><i class=w4> </i><i class=w7>s</i><i class=w8>o</i><i class=w5>r</i><i class=w4>t</i><i class=w3>i</i><i class=w8>n</i><i class=w8>g</i><i class=w4> </i><i class=w8>p</i><i class=w8>a</i><i class=w4>t</i><i class=w8>h</i><i class=w10>w</i><i class=w8>a</i><i class=w7>y</i></div>
<div class=r style="left:470px;top:692px;width:227px;height:1px;background:repeating-linear-gradient(90deg,#000080 0 1px,transparent 1px 2px);"></div>
<div class=t style="left:712px;top:626px;"><i class=w4>I</i><i class=w10>D</i><i class=w9>A</i></div>
<div class=t style="left:786px;top:626px;color:#000080;"><i class=w10>N</i><i class=w8>e</i><i class=w8>d</i><i class=w8>d</i><i class=w8>4</i><i class=w3>l</i></div>
<div class=r style="left:784px;top:645px;width:50px;height:1px;background:repeating-linear-gradient(90deg,#000080 0 1px,transparent 1px 2px);"></div>
<div class=t style="left:852px;top:626px;"><i class=w12>M</i><i class=w11>G</i><i class=w4>I</i></div>
<div class=t style="left:902px;top:626px;"><i class=w12>M</i><i class=w8>u</i><i class=w7>s</i></div>
<div class=t style="left:902px;top:650px;"><i class=w12>m</i><i class=w8>u</i><i class=w7>s</i><i class=w7>c</i><i class=w8>u</i><i class=w3>l</i><i class=w8>u</i><i class=w7>s</i></div>
<div class=t style="left:1085px;top:626px;"><i class=w8>p</i><i class=w8>e</i><i class=w5>r</i><i class=w12>m</i><i class=w8>a</i><i class=w8>n</i><i class=w8>e</i><i class=w8>n</i><i class=w4>t</i><i class=w4> </i><i class=w7>c</i><i class=w8>e</i><i class=w3>l</i><i class=w3>l</i><i class=w4> </i><i class=w3>l</i><i class=w3>i</i><i class=w8>n</i><i class=w8>e</i><i class=w4> </i><i class=w7>c</i><i class=w8>e</i><i class=w3>l</i><i class=w3>l</i></div>
<div class=r style="left:421px;top:698px;width:45px;height:73px;background:#e8eef9;"></div>
<div class=r style="left:468px;top:698px;width:240px;height:73px;background:#e8eef9;"></div>
<div class=r style="left:710px;top:698px;width:70px;height:73px;background:#e8eef9;"></div>
<div class=r style="left:782px;top:698px;width:66px;height:73px;background:#e8eef9;"></div>
<div class=r style="left:850px;top:698px;width:48px;height:73px;background:#e8eef9;"></div>
<div class=r style="left:900px;top:698px;width:73px;height:73px;background:#e8eef9;"></div>
<div class=r style="left:975px;top:698px;width:106px;height:73px;background:#e8eef9;"></div>
<div class=r style="left:1083px;top:698px;width:235px;height:73px;background:#e8eef9;"></div>
<div class=t style="left:423px;top:701px;"><i class=w8>3</i><i class=w8>2</i><i class=w4>.</i><i class=w8>7</i><i class=w12>%</i></div>
<div class=t style="left:472px;top:701px;color:#000080;"><i class=w8>u</i><i class=w8>b</i><i class=w3>i</i><i class=w8>q</i><i class=w8>u</i><i class=w3>i</i><i class=w4>t</i><i class=w3>i</i><i class=w8>n</i><i class=w5>-</i><i class=w8>d</i><i class=w8>e</i><i class=w8>p</i><i class=w8>e</i><i class=w8>n</i><i class=w8>d</i><i class=w8>e</i><i class=w8>n</i><i class=w4>t</i><i class=w4> </i><i class=w8>p</i><i class=w5>r</i><i class=w8>o</i><i class=w4>t</i><i class=w8>e</i><i class=w3>i</i><i class=w8>n</i></div>
<div class=r style="left:470px;top:720px;width:177px;height:1px;background:repeating-linear-gradient(90deg,#000080 0 1px,transparent 1px 2px);"></div>
<div class=t style="left:470px;top:725px;color:#000080;"><i class=w7>c</i><i class=w8>a</i><i class=w4>t</i><i class=w8>a</i><i class=w8>b</i><i class=w8>o</i><i class=w3>l</i><i class=w3>i</i><i class=w7>c</i><i class=w4> </i><i class=w8>p</i><i class=w5>r</i><i class=w8>o</i><i class=w7>c</i><i class=w8>e</i><i class=w7>s</i><i class=w7>s</i><i class=w4> </i><i class=w7>v</i><i class=w3>i</i><i class=w8>a</i><i class=w4> </i><i class=w4>t</i><i class=w8>h</i><i class=w8>e</i></div>
<div class=r style="left:470px;top:744px;width:157px;height:1px;background:repeating-linear-gradient(90deg,#000080 0 1px,transparent 1px 2px);"></div>
<div class=t style="left:470px;top:748px;color:#000080;"><i class=w12>m</i><i class=w8>u</i><i class=w3>l</i><i class=w4>t</i><i class=w3>i</i><i class=w7>v</i><i class=w8>e</i><i class=w7>s</i><i class=w3>i</i><i class=w7>c</i><i class=w8>u</i><i class=w3>l</i><i class=w8>a</i><i class=w5>r</i><i class=w4> </i><i class=w8>b</i><i class=w8>o</i><i class=w8>d</i><i class=w7>y</i><i class=w4> </i><i class=w7>s</i><i class=w8>o</i><i class=w5>r</i><i class=w4>t</i><i class=w3>i</i><i class=w8>n</i><i class=w8>g</i><i class=w4> </i><i class=w8>p</i><i class=w8>a</i><i class=w4>t</i><i class=w8>h</i><i class=w10>w</i><i class=w8>a</i><i class=w7>y</i></div>
<div class=r style="left:470px;top:767px;width:227px;height:1px;background:repeating-linear-gradient(90deg,#000080 0 1px,transparent 1px 2px);"></div>
<div class=t style="left:712px;top:701px;"><i class=w4>I</i><i class=w11>G</i><i class=w4>I</i></div>
<div class=t style="left:786px;top:701px;color:#000080;"><i class=w10>N</i><i class=w8>d</i><i class=w4>f</i><i class=w3>i</i><i class=w8>p</i><i class=w8>1</i></div>
<div class=r style="left:784px;top:720px;width:46px;height:1px;background:repeating-linear-gradient(90deg,#000080 0 1px,transparent 1px 2px);"></div>
<div class=t style="left:852px;top:701px;"><i class=w12>M</i><i class=w11>G</i><i class=w4>I</i></div>
<div class=t style="left:902px;top:701px;"><i class=w12>M</i><i class=w8>u</i><i class=w7>s</i></div>
<div class=t style="left:902px;top:725px;"><i class=w12>m</i><i class=w8>u</i><i class=w7>s</i><i class=w7>c</i><i class=w8>u</i><i class=w3>l</i><i class=w8>u</i><i class=w7>s</i></div>
<div class=t style="left:977px;top:701px;"><i class=w12>M</i><i class=w11>G</i><i class=w4>I</i><i class=w4>:</i><i class=w12>M</i><i class=w11>G</i><i class=w4>I</i><i class=w4>:</i><i class=w8>9</i><i class=w8>7</i><i class=w8>2</i><i class=w8>9</i><i class=w8>7</i></div>
<div class=t style="left:1085px;top:701px;"><i class=w12>m</i><i class=w8>a</i><i class=w7>c</i><i class=w5>r</i><i class=w8>o</i><i class=w8>p</i><i class=w8>h</i><i class=w8>a</i><i class=w8>g</i><i class=w8>e</i><i class=w4>,</i><i class=w8>p</i><i class=w5>r</i><i class=w3>i</i><i class=w12>m</i><i class=w8>a</i><i class=w5>r</i><i class=w7>y</i><i class=w4> </i><i class=w7>c</i><i class=w8>e</i><i class=w3>l</i><i class=w3>l</i><i class=w4> </i><i class=w7>c</i><i class=w8>u</i><i class=w3>l</i><i class=w4>t</i><i class=w8>u</i><i class=w5>r</i><i class=w8>e</i><i class=w4> </i><i class=w7>c</i><i class=w8>e</i><i class=w3>l</i><i class=w3>l</i></div>
<div class=t style="left:1085px;top:725px;"><i class=w12>m</i><i class=w8>a</i><i class=w7>c</i><i class=w5>r</i><i class=w8>o</i><i class=w8>p</i><i class=w8>h</i><i class=w8>a</i><i class=w8>g</i><i class=w8>e</i><i class=w4>,</i><i class=w8>p</i><i class=w5>r</i><i class=w3>i</i><i class=w12>m</i><i class=w8>a</i><i class=w5>r</i><i class=w7>y</i><i class=w4> </i><i class=w7>c</i><i class=w8>e</i><i class=w3>l</i><i class=w3>l</i><i class=w4> </i><i class=w7>c</i><i class=w8>u</i><i class=w3>l</i><i class=w4>t</i><i class=w8>u</i><i class=w5>r</i><i class=w8>e</i><i class=w4> </i><i class=w7>c</i><i class=w8>e</i><i class=w3>l</i><i class=w3>l</i></div>
</body></html>
